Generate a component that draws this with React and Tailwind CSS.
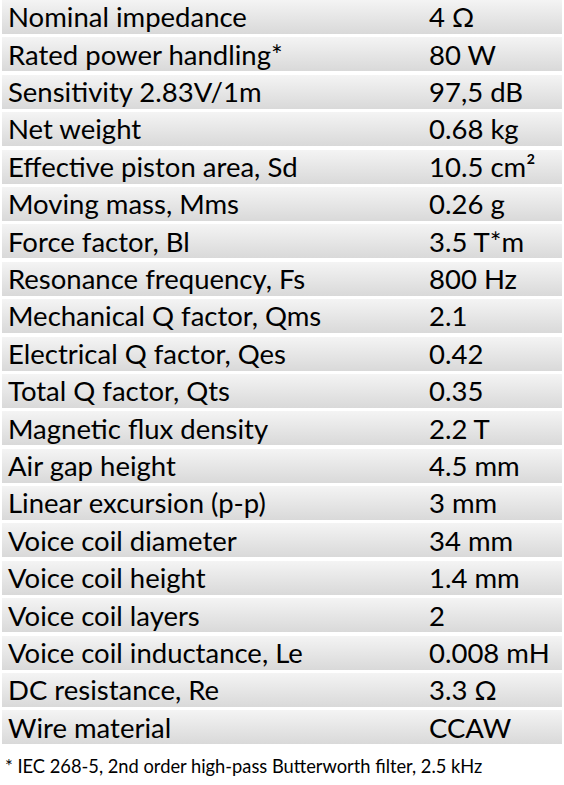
import React from "react";

const rows = [
  ["Nominal impedance", "4 Ω"],
  ["Rated power handling*", "80 W"],
  ["Sensitivity 2.83V/1m", "97,5 dB"],
  ["Net weight", "0.68 kg"],
  ["Effective piston area, Sd", "10.5 cm²"],
  ["Moving mass, Mms", "0.26 g"],
  ["Force factor, Bl", "3.5 T*m"],
  ["Resonance frequency, Fs", "800 Hz"],
  ["Mechanical Q factor, Qms", "2.1"],
  ["Electrical Q factor, Qes", "0.42"],
  ["Total Q factor, Qts", "0.35"],
  ["Magnetic flux density", "2.2 T"],
  ["Air gap height", "4.5 mm"],
  ["Linear excursion (p-p)", "3 mm"],
  ["Voice coil diameter", "34 mm"],
  ["Voice coil height", "1.4 mm"],
  ["Voice coil layers", "2"],
  ["Voice coil inductance, Le", "0.008 mH"],
  ["DC resistance, Re", "3.3 Ω"],
  ["Wire material", "CCAW"],
];

export default function App() {
  return (
    <div className="w-[564px] h-[785px] bg-white text-black" style={{ fontFamily: "Lato, 'Open Sans', sans-serif" }}>
      <div className="flex flex-col gap-[3.4px] px-[2px]">
        {rows.map(([k, v]) => (
          <div key={k} className="flex h-[34px] items-center bg-gradient-to-b from-[#f4f4f4] to-[#d9d9d9] text-[27.5px] leading-none">
            <div className="w-[427px] pl-[6px]">{k}</div>
            <div className="flex-1">{v}</div>
          </div>
        ))}
      </div>
      <div className="pl-[5px] pt-[13px] text-[18.3px] leading-none">
        * IEC 268-5, 2nd order high-pass Butterworth filter, 2.5 kHz
      </div>
    </div>
  );
}
